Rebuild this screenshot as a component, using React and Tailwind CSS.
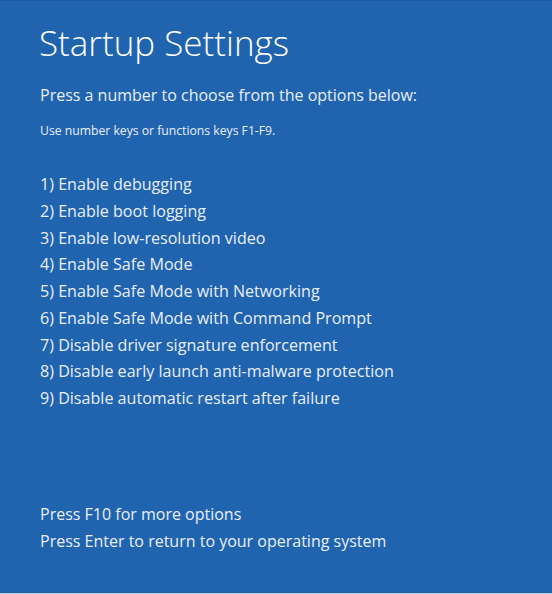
import React from 'react';

const options = [
  '1) Enable debugging',
  '2) Enable boot logging',
  '3) Enable low-resolution video',
  '4) Enable Safe Mode',
  '5) Enable Safe Mode with Networking',
  '6) Enable Safe Mode with Command Prompt',
  '7) Disable driver signature enforcement',
  '8) Disable early launch anti-malware protection',
  '9) Disable automatic restart after failure',
];

export default function App() {
  return (
    <div
      className="w-[552px] h-[594px] bg-[#2064b0] text-[#e9eef7] flex flex-col border-t border-[#1c5aa0] border-b border-b-[#b7c8de] overflow-hidden"
      style={{ fontFamily: '"Open Sans", "Noto Sans", sans-serif' }}
    >
      <div className="pl-[40px] pt-[18px]">
        <h1 className="-ml-[1px] text-[35px] font-light leading-[48px] text-white">Startup Settings</h1>
        <p className="mt-[17px] text-[16px] leading-[22px]">Press a number to choose from the options below:</p>
        <p className="mt-[17px] text-[12.2px] leading-[16px]">Use number keys or functions keys F1-F9.</p>
        <ul className="mt-[32px] flex flex-col">
          {options.map((o) => (
            <li key={o} className="text-[16.1px] leading-[26.75px]">{o}</li>
          ))}
        </ul>
      </div>
      <div className="mt-auto pl-[40px] pb-[38px] flex flex-col">
        <p className="text-[16px] leading-[26.8px]">Press F10 for more options</p>
        <p className="text-[16px] leading-[26.8px]">Press Enter to return to your operating system</p>
      </div>
    </div>
  );
}
